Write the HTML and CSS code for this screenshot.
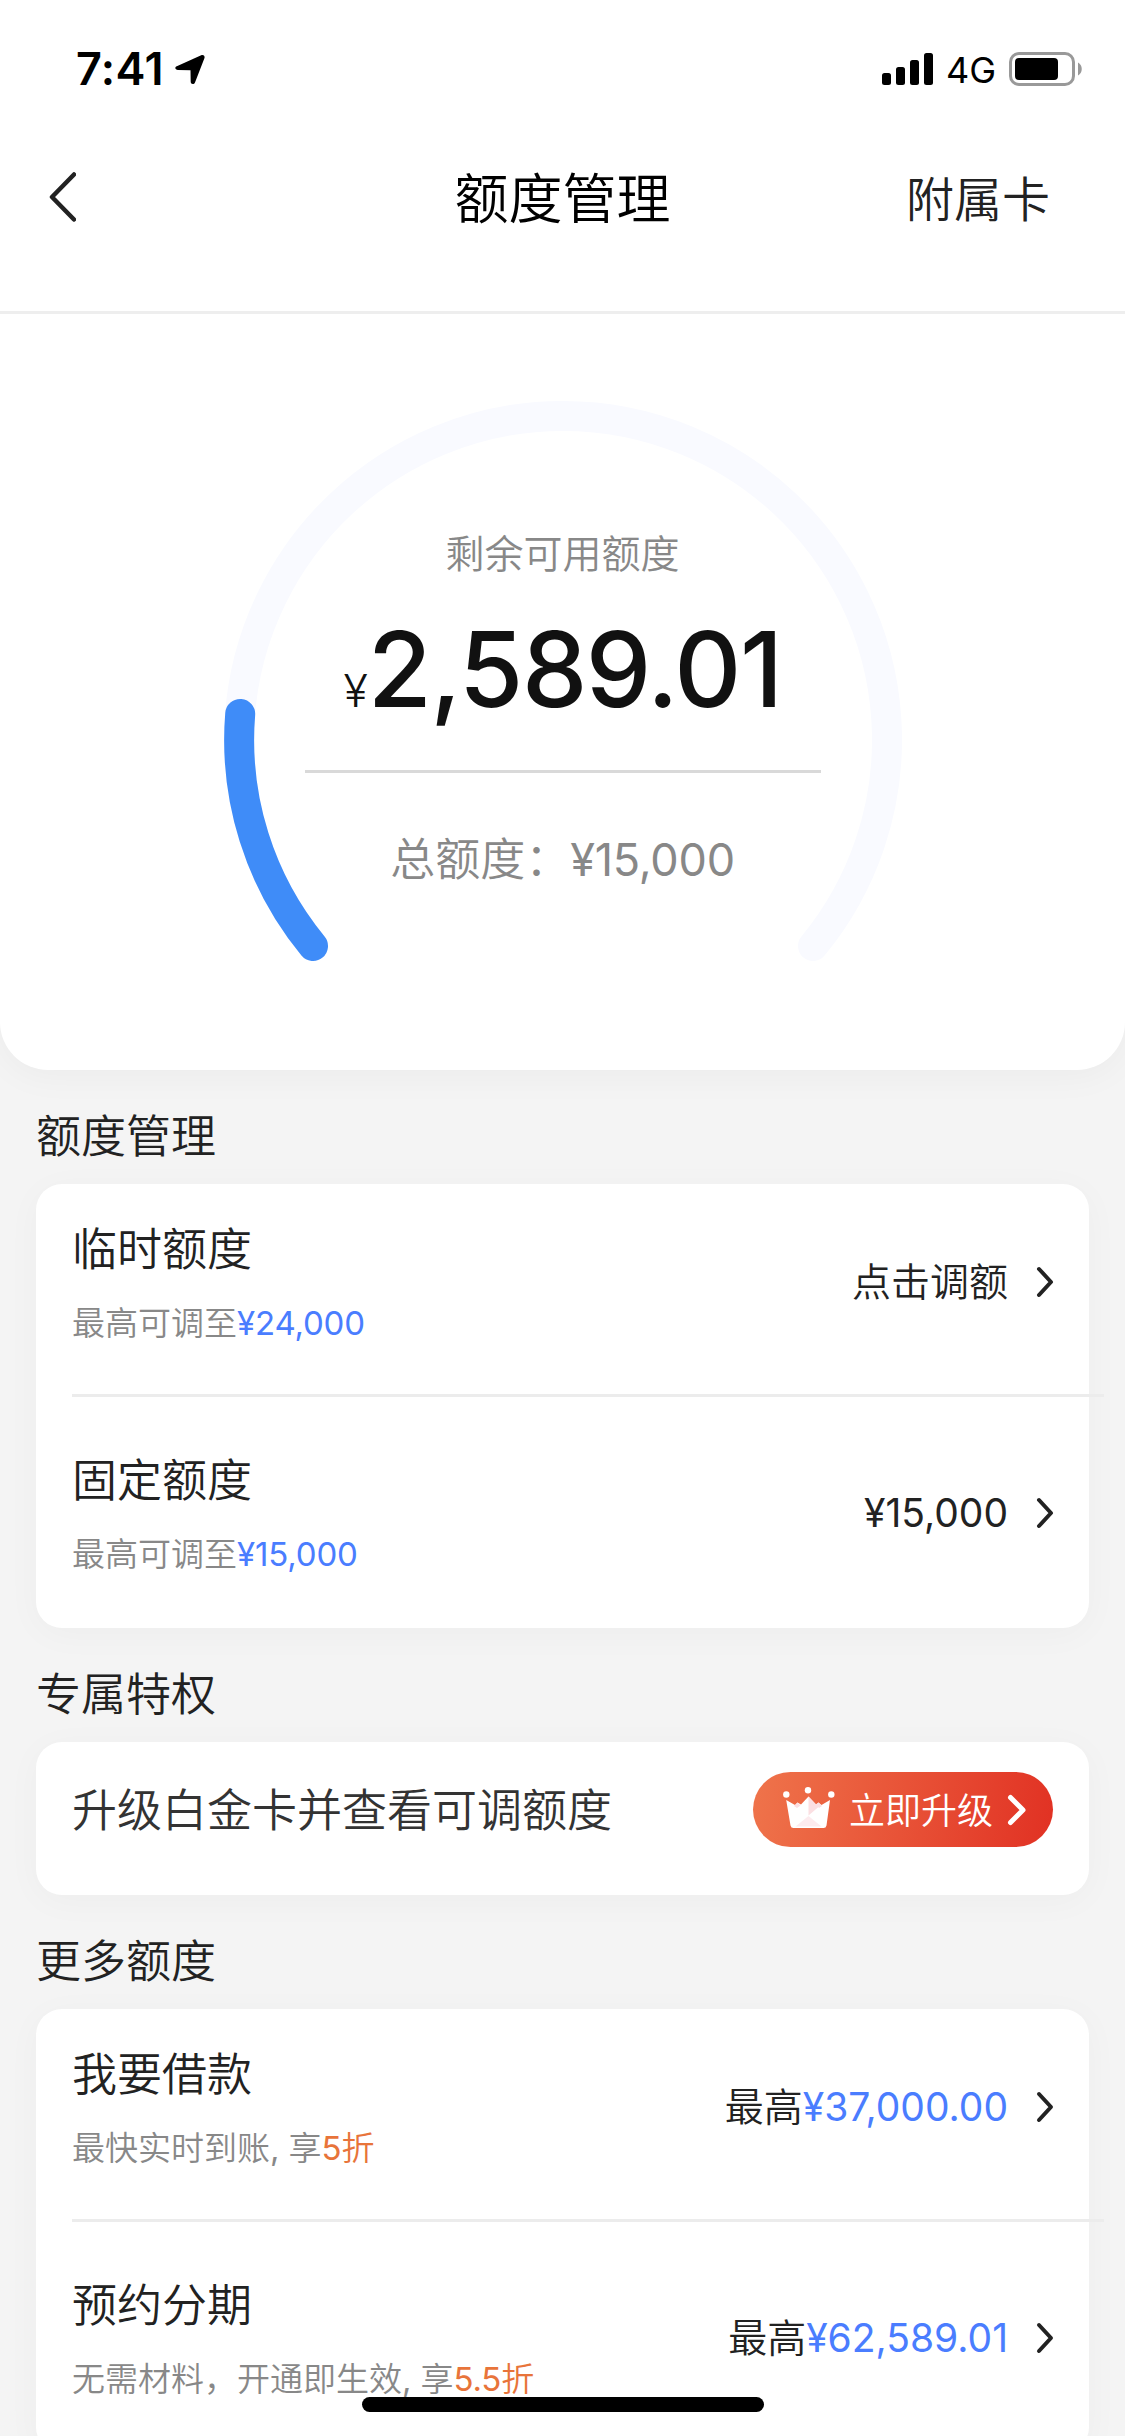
FILE: index.html
```html
<!DOCTYPE html>
<html lang="zh-CN">
<head>
<meta charset="utf-8">
<title>额度管理</title>
<link rel="stylesheet" href="styles.css">
</head>
<body>
<div class="screen">
  <section class="hero">
    <div class="status">
      <div class="status-left">
        <span class="time">7:41</span>
        <svg class="location" width="30" height="31" viewBox="0 0 30 31"><path d="M1.800 12.200 26.200 1.200c2.200-.9 4 .8 3.200 3L20 28.400c-1 2.500-4.300 2-4.300-.6L15.500 16.300 3 16C.2 15.900-.7 13.300 1.800 12.200Z"/></svg>
      </div>
      <div class="status-right">
        <svg class="signal" width="51" height="32" viewBox="0 0 51 32"><rect x="0" y="20" width="9" height="12" rx="2.500"/><rect x="14" y="14" width="9" height="18" rx="2.500"/><rect x="28" y="7" width="9" height="25" rx="2.500"/><rect x="42" y="0" width="9" height="32" rx="2.500"/></svg>
        <span class="network">4G</span>
        <svg class="battery" width="74" height="34" viewBox="0 0 74 34"><rect x="1.500" y="1.500" width="63" height="31" rx="8.500" fill="none" stroke="#999" stroke-width="3"/><rect x="6" y="6" width="43" height="22" rx="4"/><path d="M69 10.500c5 2.500 5 10.500 0 13Z" fill="#999"/></svg>
      </div>
    </div>
    <header class="nav">
      <svg class="back" width="28" height="50" viewBox="0 0 28 50"><path d="M26 2.500 4 25 26 47.500"/></svg>
      <h1 class="nav-title">额度管理</h1>
      <span class="nav-action">附属卡</span>
    </header>
    <div class="gauge">
      <svg class="gauge-ring" width="680" height="590" viewBox="0 0 680 590">
        <path class="track" d="M90 546A324 324 0 1 1 590 546"/>
        <path class="value" d="M90 546A324 324 0 0 1 17.200 314"/>
      </svg>
      <div class="gauge-body">
        <div class="gauge-label">剩余可用额度</div>
        <div class="gauge-amount"><span class="yen">¥</span><span class="digits">2,589.01</span></div>
        <div class="gauge-total">总额度：<span class="num">¥15,000</span></div>
      </div>
    </div>
  </section>

  <h2 class="section-title">额度管理</h2>
  <section class="card">
    <div class="row">
      <div class="row-main">
        <div class="row-title">临时额度</div>
        <div class="row-sub">最高可调至<span class="num blue">¥24,000</span></div>
      </div>
      <div class="row-side">点击调额</div>
      <svg class="chevron" width="18" height="32" viewBox="0 0 18 32"><path d="M3 3 15 16 3 29"/></svg>
    </div>
    <div class="row">
      <div class="row-main">
        <div class="row-title">固定额度</div>
        <div class="row-sub">最高可调至<span class="num blue">¥15,000</span></div>
      </div>
      <div class="row-side"><span class="num">¥15,000</span></div>
      <svg class="chevron" width="18" height="32" viewBox="0 0 18 32"><path d="M3 3 15 16 3 29"/></svg>
    </div>
  </section>

  <h2 class="section-title">专属特权</h2>
  <section class="card upgrade">
    <div class="upgrade-text">升级白金卡并查看可调额度</div>
    <div class="upgrade-button">
      <svg class="crown" width="52" height="42" viewBox="0 0 52 42">
        <g fill="#fff"><circle cx="3.300" cy="7.500" r="3.200"/><circle cx="25" cy="3.200" r="3.200"/><circle cx="48.300" cy="7.500" r="3.200"/></g>
        <path fill="#fff" d="M3.200 13 12 18 14.500 15.500 18 17.500 25.500 9.500 33 17.500 35.500 15.500 38.500 18 47 13 43.500 38.500Q43 41 40.500 41H10.500Q8 41 7.500 38.500Z"/>
        <path fill="#fbdfe2" d="M25.500 9.500 35.500 20 25.500 28.500ZM11 19 14.500 15.500 17.500 18.500 14 21ZM33 17.500 35.500 15.500 39 19 36 21Z"/>
        <path fill="#fdebee" d="M12.500 39.500 25.500 29 38.500 39.500Z"/>
      </svg>
      <span class="upgrade-label">立即升级</span>
      <svg class="upgrade-arrow" width="20" height="32" viewBox="0 0 20 32"><path d="M3.500 3.500 16 16 3.500 28.500"/></svg>
    </div>
  </section>

  <h2 class="section-title">更多额度</h2>
  <section class="card">
    <div class="row">
      <div class="row-main">
        <div class="row-title">我要借款</div>
        <div class="row-sub">最快实时到账<span class="num">, </span>享<span class="orange"><span class="num">5</span>折</span></div>
      </div>
      <div class="row-side">最高<span class="num blue">¥37,000.00</span></div>
      <svg class="chevron" width="18" height="32" viewBox="0 0 18 32"><path d="M3 3 15 16 3 29"/></svg>
    </div>
    <div class="row">
      <div class="row-main">
        <div class="row-title">预约分期</div>
        <div class="row-sub">无需材料，开通即生效<span class="num">, </span>享<span class="orange"><span class="num">5.5</span>折</span></div>
      </div>
      <div class="row-side">最高<span class="num blue">¥62,589.01</span></div>
      <svg class="chevron" width="18" height="32" viewBox="0 0 18 32"><path d="M3 3 15 16 3 29"/></svg>
    </div>
  </section>
  <div class="home-indicator"></div>
</div>
</body>
</html>
```
FILE: styles.css
```css
* { box-sizing: border-box; }

body {
  margin: 0;
  background: #f4f4f4;
  color: #222;
  font-family: "Noto Sans CJK SC", sans-serif;
  font-weight: 350;
}

h1, h2 { margin: 0; font-weight: 350; }

svg { display: block; flex: none; }

.screen {
  position: relative;
  width: 1125px;
  height: 2436px;
  overflow: hidden;
}

.num {
  font-family: Inter, sans-serif;
  font-weight: 400;
  letter-spacing: -0.005em;
}

.blue { color: #4a7dff; }
.orange { color: #e8743a; }

/* Balance panel */
.hero {
  height: 1070px;
  background: #fff;
  border-radius: 0 0 48px 48px;
  box-shadow: 0 6px 36px rgba(0, 0, 0, 0.04);
}

.status {
  height: 132px;
  padding: 6px 42px 0 76px;
  display: flex;
  align-items: center;
  justify-content: space-between;
  color: #000;
  font-family: Inter, sans-serif;
}

.status-left, .status-right { display: flex; align-items: center; }
.time { font-size: 45px; font-weight: 600; letter-spacing: 0.4px; width: 99px; line-height: 54px; }
.signal { margin-right: 13px; }
.network { width: 63px; font-size: 36px; font-weight: 400; letter-spacing: 0; line-height: 44px; padding-top: 2px; }

.nav {
  height: 182px;
  padding: 0 75px 52px 48px;
  border-bottom: 3px solid #eee;
  display: grid;
  grid-template-columns: 200px 1fr 173px;
  align-items: center;
}

.back { margin-top: 2px; }
.back path { fill: none; stroke: #222; stroke-width: 4.500; stroke-linecap: round; stroke-linejoin: round; }
.nav-title { font-size: 54px; line-height: 64px; text-align: center; color: #000; }
.nav-action { font-size: 48px; line-height: 58px; text-align: right; }

.gauge {
  display: grid;
  justify-content: center;
  padding-top: 86px;
}

.gauge-ring, .gauge-body { grid-area: 1 / 1; }
.gauge-ring path { fill: none; stroke-width: 30; stroke-linecap: round; }
.gauge-ring .track { stroke: #f9faff; }
.gauge-ring .value { stroke: #3f8cf8; }

.gauge-body {
  display: flex;
  flex-direction: column;
  align-items: center;
  padding-top: 126px;
  color: #888;
}

.gauge-label { font-size: 39px; line-height: 50px; }

.gauge-amount {
  width: 516px;
  height: 197px;
  padding-top: 30px;
  border-bottom: 3px solid #d9d9d9;
  display: flex;
  align-items: baseline;
  justify-content: center;
  color: #111;
  font-family: Inter, sans-serif;
  line-height: 126px;
}

.yen { font-size: 45px; font-weight: 350; }
.digits { font-size: 104px; font-weight: 540; letter-spacing: -1.5px; }
.gauge-total { font-size: 45px; line-height: 60px; margin-top: 54px; }

/* Sections */
.section-title {
  height: 114px;
  padding: 34px 36px 0;
  font-size: 45px;
  line-height: 60px;
}

.card {
  margin: 0 36px;
  background: #fff;
  border-radius: 26px;
  box-shadow: 0 6px 36px rgba(0, 0, 0, 0.03);
}

.row {
  height: 213px;
  margin: 0 -15px 0 36px;
  padding-right: 50px;
  display: flex;
}

.row:first-child { border-bottom: 3px solid #ececec; }
.row + .row { height: 231px; padding-top: 18px; }

.row-main { flex: 1; padding-top: 33px; }
.row-title { font-size: 45px; line-height: 60px; }
.row-sub { font-size: 33px; line-height: 44px; margin-top: 22px; color: #888; white-space: nowrap; }
.row-side { font-size: 39px; line-height: 50px; padding-top: 70px; white-space: nowrap; }
.row-side .num { letter-spacing: 0; }

.chevron { margin: 82px 0 0 28px; }
.chevron path { fill: none; stroke: #222; stroke-width: 4; stroke-linecap: round; stroke-linejoin: round; }

.upgrade {
  height: 153px;
  padding: 0 36px 18px;
  display: flex;
  align-items: center;
  justify-content: space-between;
  color: #333;
}

.upgrade-text { font-size: 45px; line-height: 60px; padding-bottom: 3px; }

.upgrade-button {
  width: 300px;
  height: 75px;
  padding: 0 26px 0 30px;
  border-radius: 38px;
  background: linear-gradient(100deg, #ef744b, #e13123);
  display: flex;
  align-items: center;
  color: #fff;
}

.crown { margin-bottom: 3px; }
.upgrade-label { margin: 0 14px; font-size: 36px; line-height: 48px; padding-bottom: 3px; }
.upgrade-arrow path { fill: none; stroke: #fff; stroke-width: 5; stroke-linecap: round; stroke-linejoin: round; }

.home-indicator {
  position: absolute;
  left: 362px;
  top: 2397px;
  width: 402px;
  height: 15px;
  border-radius: 8px;
  background: #000;
}
```
